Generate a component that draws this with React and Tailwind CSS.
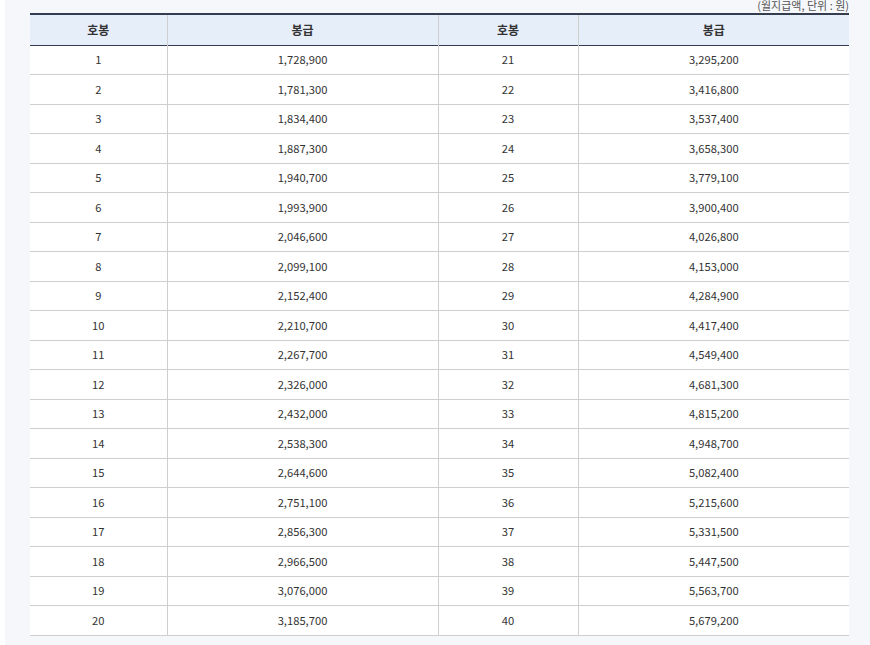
import React from "react";

const left = [
  "1,728,900", "1,781,300", "1,834,400", "1,887,300", "1,940,700",
  "1,993,900", "2,046,600", "2,099,100", "2,152,400", "2,210,700",
  "2,267,700", "2,326,000", "2,432,000", "2,538,300", "2,644,600",
  "2,751,100", "2,856,300", "2,966,500", "3,076,000", "3,185,700",
];
const right = [
  "3,295,200", "3,416,800", "3,537,400", "3,658,300", "3,779,100",
  "3,900,400", "4,026,800", "4,153,000", "4,284,900", "4,417,400",
  "4,549,400", "4,681,300", "4,815,200", "4,948,700", "5,082,400",
  "5,215,600", "5,331,500", "5,447,500", "5,563,700", "5,679,200",
];

const App = () => {
  return (
    <div className="bg-white pl-[5px] w-[870px] h-[645px] overflow-hidden font-['Noto_Sans_CJK_KR','Noto_Sans',sans-serif] text-[#333]">
      <div className="bg-[#f5f7fb] h-full pl-[25px] pr-[21px] flex flex-col">
        <div className="text-right text-[11px] leading-[16px] -mt-[3px] text-[#555]">
          (월지급액, 단위 : 원)
        </div>
        <table className="w-[819px] table-fixed border-collapse bg-white text-[11.2px]">
          <colgroup>
            <col className="w-[137px]" />
            <col className="w-[271px]" />
            <col className="w-[140px]" />
            <col className="w-[271px]" />
          </colgroup>
          <thead>
            <tr className="bg-[#e6eefa] border-t-2 border-t-[#333d4f] border-b border-b-[#333d4f]">
              {["호봉", "봉급", "호봉", "봉급"].map((head, i) => (
                <th
                  key={i}
                  className="h-[31px] p-0 text-center text-[12px] font-bold border-l border-l-[#cfcfcf] first:border-l-0"
                >
                  {head}
                </th>
              ))}
            </tr>
          </thead>
          <tbody>
            {left.map((pay, i) => (
              <tr key={i} className="border-b border-b-[#cfcfcf]">
                <td className="h-[29.5px] p-0 text-center">{i + 1}</td>
                <td className="p-0 text-center border-l border-l-[#cfcfcf]">{pay}</td>
                <td className="p-0 text-center border-l border-l-[#cfcfcf]">{i + 21}</td>
                <td className="p-0 text-center border-l border-l-[#cfcfcf]">{right[i]}</td>
              </tr>
            ))}
          </tbody>
        </table>
      </div>
    </div>
  );
};

export default App;
